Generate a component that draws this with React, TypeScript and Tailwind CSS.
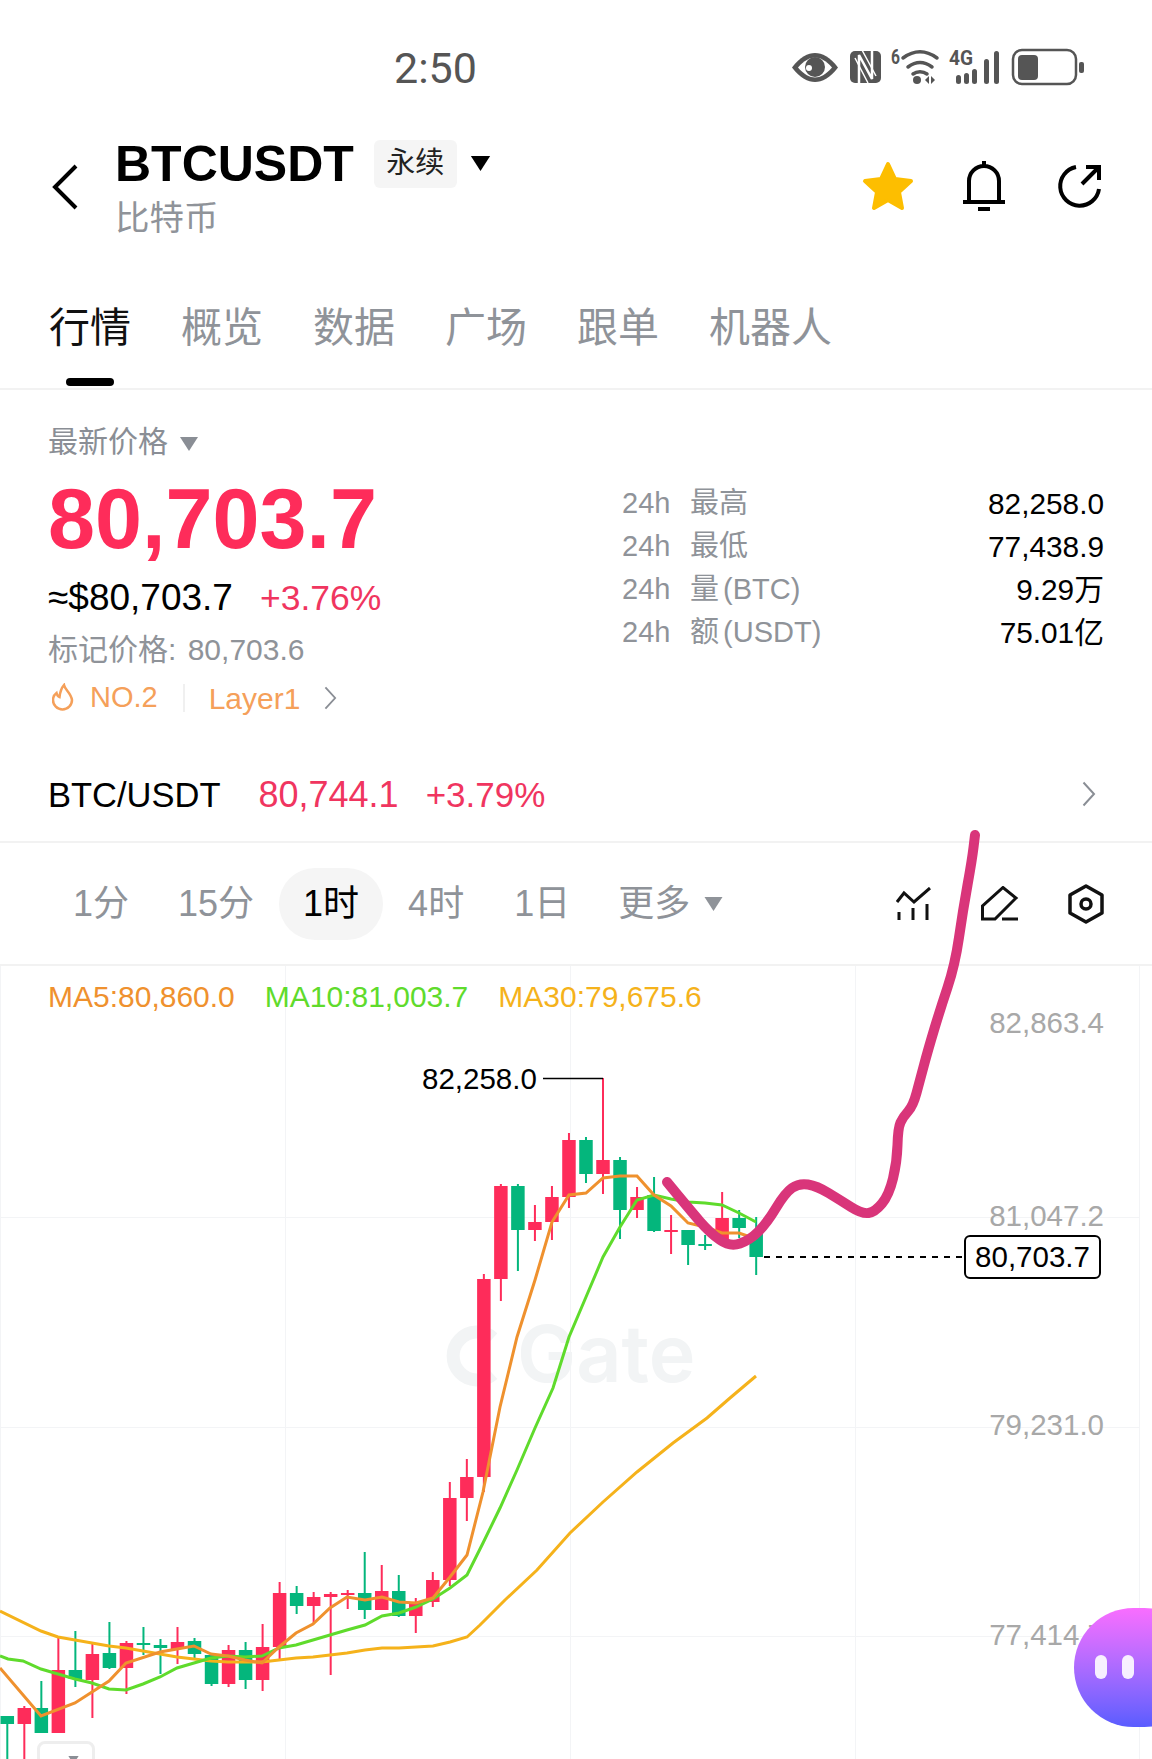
import React from 'react';

const RED = '#fe2c5a';
const GREEN = '#04b67c';

// [isRed, bodyTop, bodyBottom, wickTop, wickBottom], one candle every 17px
const candles: [number, number, number, number, number][] = [
  [0, 1716, 1724, 1716, 1760], [1, 1708, 1724, 1706, 1760], [0, 1708, 1733, 1681, 1733], [1, 1670, 1733, 1638, 1733],
  [0, 1670, 1679, 1631, 1687], [1, 1654, 1680, 1643, 1718], [0, 1653, 1668, 1622, 1669], [1, 1643, 1668, 1641, 1694],
  [0, 1643, 1645, 1627, 1655], [0, 1645, 1648, 1639, 1674], [1, 1642, 1649, 1627, 1664], [0, 1641, 1654, 1638, 1658],
  [0, 1655, 1684, 1655, 1686], [1, 1650, 1684, 1645, 1687], [0, 1650, 1680, 1642, 1689], [1, 1647, 1680, 1624, 1691],
  [1, 1593, 1647, 1582, 1659], [0, 1593, 1606, 1586, 1614], [1, 1597, 1606, 1592, 1623], [1, 1594, 1597, 1592, 1675],
  [1, 1593, 1595, 1590, 1609], [0, 1593, 1610, 1552, 1619], [1, 1591, 1610, 1565, 1610], [0, 1591, 1616, 1575, 1617],
  [1, 1602, 1616, 1598, 1633], [1, 1580, 1602, 1572, 1607], [1, 1498, 1580, 1482, 1586], [1, 1477, 1498, 1459, 1521],
  [1, 1279, 1477, 1274, 1492], [1, 1186, 1279, 1184, 1301], [0, 1186, 1230, 1184, 1271], [1, 1222, 1230, 1205, 1241],
  [1, 1197, 1222, 1186, 1240], [1, 1140, 1197, 1133, 1208], [0, 1140, 1174, 1137, 1183], [1, 1160, 1174, 1078, 1194],
  [0, 1160, 1210, 1157, 1239], [1, 1197, 1210, 1187, 1218], [0, 1195, 1231, 1177, 1232], [1, 1230, 1232, 1215, 1254],
  [0, 1230, 1245, 1230, 1265], [0, 1244, 1246, 1235, 1250], [1, 1218, 1240, 1192, 1240], [0, 1218, 1228, 1210, 1238],
  [0, 1233, 1257, 1217, 1275],
];

const ma5 =
  '0,1668 41,1716 75,1703 109,1681 126,1663 160,1652 177,1649 194,1646 211,1654 228,1656 245,1660 262,1663 279,1647 296,1633 313,1624 330,1608 347,1597 365,1600 382,1597 399,1602 416,1603 433,1598 450,1577 467,1555 483,1492 500,1407 517,1337 535,1280 552,1222 569,1195 586,1193 603,1178 620,1176 637,1176 654,1195 671,1206 688,1223 705,1227 722,1233 739,1233 756,1239';
const ma10 =
  '0,1656 8,1659 23,1661 41,1669 58,1674 75,1679 92,1683 109,1689 126,1690 143,1684 160,1677 177,1668 194,1663 211,1658 228,1656 245,1657 262,1656 279,1648 296,1645 313,1640 330,1635 347,1630 365,1625 382,1616 399,1613 416,1607 433,1599 450,1588 467,1575 483,1543 500,1508 517,1470 535,1428 553,1388 569,1337 586,1297 603,1257 620,1227 637,1200 654,1195 671,1199 688,1202 705,1203 722,1205 739,1213 756,1222';
const ma30 =
  '0,1611 41,1631 58,1637 75,1640 92,1643 109,1646 126,1648 143,1651 160,1654 177,1657 194,1659 211,1661 228,1662 245,1662 262,1662 279,1660 296,1658 313,1657 330,1655 347,1653 365,1650 382,1648 399,1648 416,1647 433,1646 450,1642 467,1637 480,1625 505,1600 537,1570 570,1533 603,1502 637,1472 673,1443 707,1418 730,1398 756,1376';

// pen stroke scribbled over the screenshot
const scribble: [number, number][] = [
  [667, 1182], [690, 1210], [710, 1233], [730, 1247], [750, 1240], [767, 1223], [785, 1193], [799, 1183], [817, 1186],
  [840, 1200], [862, 1214], [875, 1212], [889, 1195], [897, 1162], [898, 1128], [903, 1117], [913, 1106], [920, 1080],
  [928, 1050], [940, 1010], [955, 965], [963, 910], [972, 860], [975, 835],
];

// rounds the corners of the scribble with midpoint quadratics
function smoothPath(pts: [number, number][]) {
  let d = `M${pts[0][0]} ${pts[0][1]}`;
  for (let i = 1; i < pts.length - 1; i++) {
    const mx = (pts[i][0] + pts[i + 1][0]) / 2;
    const my = (pts[i][1] + pts[i + 1][1]) / 2;
    d += `Q${pts[i][0]} ${pts[i][1]} ${mx} ${my}`;
  }
  const last = pts[pts.length - 1];
  return `${d}L${last[0]} ${last[1]}`;
}

function Triangle({ className }: { className: string }) {
  return (
    <svg viewBox="0 0 18 14" className={className} fill="currentColor">
      <path d="M0 0h18L9 14z" />
    </svg>
  );
}

function StatusIcons() {
  return (
    <svg width="292" height="48" viewBox="792 43 292 48" className="text-[#555555]" fill="currentColor">
      {/* eye */}
      <path d="M792 67.500C800 57 808 53 815 53s15 4 23 14.500C830 78 822 82 815 82s-15-4-23-14.500z" />
      <path d="M798 67.500C804 60.500 810 57.500 815 57.500s11 3 17 10c-6 7-12 10-17 10s-11-3-17-10z" fill="#fff" />
      <circle cx="815" cy="67" r="10" />
      <circle cx="809" cy="68" r="3" fill="#fff" />
      {/* nfc */}
      <rect x="850" y="51" width="31" height="32" rx="5" />
      <path d="M859 83V55l13 24V51" fill="none" stroke="#fff" strokeWidth="2.500" />
      <path d="M862 50l14 26M855 58l13 25" fill="none" stroke="#fff" strokeWidth="1.500" />
      {/* wifi */}
      <text x="891" y="64" fontSize="20" fontWeight="700" textLength="9" lengthAdjust="spacingAndGlyphs" fontFamily="Roboto, sans-serif">6</text>
      <g fill="none" stroke="currentColor" strokeWidth="3.500" strokeLinecap="round">
        <path d="M903 58c11-8 23-8 34 0M908 67c8-6 16-6 24 0M913 74c4-3 10-3 14 0" />
      </g>
      <circle cx="917" cy="80" r="4" />
      <path d="M925 80l4-4v8zM931 76l4 4-4 4z" />
      {/* 4g */}
      <text x="949" y="65" fontSize="20" fontWeight="700" textLength="24" lengthAdjust="spacingAndGlyphs" fontFamily="Roboto, sans-serif">4G</text>
      <rect x="956" y="75" width="5" height="9" rx="2.500" />
      <rect x="964" y="73" width="5" height="11" rx="2.500" />
      <rect x="972" y="69" width="5" height="15" rx="2.500" />
      <rect x="984" y="59" width="5" height="25" rx="2.500" />
      <rect x="994" y="51" width="5" height="33" rx="2.500" />
      {/* battery */}
      <rect x="1013" y="50" width="63" height="34" rx="9" fill="none" stroke="currentColor" strokeWidth="2.500" />
      <rect x="1018" y="55" width="20" height="25" rx="4" />
      <rect x="1079" y="62" width="5" height="11" rx="2" />
    </svg>
  );
}

function Chevron({ className }: { className: string }) {
  return (
    <svg viewBox="0 0 14 26" className={className} fill="none" stroke="currentColor" strokeWidth="2">
      <path d="M1.500 1.500L12 13 1.500 24.500" />
    </svg>
  );
}

function Chart() {
  return (
    <div className="relative flex-1 overflow-hidden">
      <svg className="absolute inset-0" width="1152" height="793" viewBox="0 966 1152 793" fill="none">
        {[0, 285, 570, 855, 1139].map((x) => (
          <path key={x} d={`M${x + 0.5} 966V1759`} stroke="#f3f4f6" />
        ))}
        {[1217, 1427, 1636].map((y) => (
          <path key={y} d={`M0 ${y + 0.5}H1139`} stroke="#f3f4f6" />
        ))}
        {/* watermark logo */}
        <path d="M493 1338a24 24 0 1 0 0 36" stroke="#f2f4f5" strokeWidth="13" />
        <text x="517" y="1382" fontSize="79" fontWeight="600" fill="#f2f4f5" fontFamily="Inter, sans-serif">Gate</text>
        {candles.map(([red, top, bottom, wickTop, wickBottom], i) => {
          const x = 7.3 + i * 17.02;
          const color = red ? RED : GREEN;
          return (
            <g key={i} fill={color}>
              <rect x={x - 1} y={wickTop} width="2" height={wickBottom - wickTop} />
              <rect x={x - 6.750} y={top} width="13.500" height={bottom - top} />
            </g>
          );
        })}
        <polyline points={ma30} stroke="#f5b21b" strokeWidth="3" />
        <polyline points={ma10} stroke="#5fdb2c" strokeWidth="3" />
        <polyline points={ma5} stroke="#ef912e" strokeWidth="3" />
        <path d="M543 1078.500H603" stroke="#000" strokeWidth="1.500" />
        <path d="M764 1257H964" stroke="#000" strokeWidth="2" strokeDasharray="6 6" />
      </svg>

      <div className="absolute left-[48px] top-[13px] flex gap-[30px] text-[30px] leading-9">
        <span className="text-[#ef912e]">MA5:80,860.0</span>
        <span className="text-[#5fdb2c]">MA10:81,003.7</span>
        <span className="text-[#f5b21b]">MA30:79,675.6</span>
      </div>

      <span className="absolute right-[48px] top-[39px] text-[29.500px] leading-9 text-[#a8a8a8]">82,863.4</span>
      <span className="absolute right-[48px] top-[232px] text-[29.500px] leading-9 text-[#a8a8a8]">81,047.2</span>
      <span className="absolute right-[48px] top-[441px] text-[29.500px] leading-9 text-[#a8a8a8]">79,231.0</span>
      <span className="absolute right-[48px] top-[651px] text-[29.500px] leading-9 text-[#a8a8a8]">77,414.7</span>

      <span className="absolute left-[422px] top-[95px] text-[29.500px] leading-9 text-black">82,258.0</span>
      <div className="absolute left-[964px] top-[269px] flex h-[44px] w-[137px] items-center justify-center rounded-md border-2 border-black bg-white text-[29.500px] text-black">
        80,703.7
      </div>

      <div className="absolute left-[37px] top-[775px] h-[40px] w-[58px] rounded-lg border-[3px] border-[#eeeeee] bg-white">
        <Triangle className="absolute left-[27px] top-[12px] h-[8px] w-[13px] text-[#8a8e95]" />
      </div>
    </div>
  );
}

export default function App() {
  return (
    <div className="relative flex h-[1759px] w-[1152px] flex-col overflow-hidden bg-white font-['Liberation_Sans','Noto_Sans_CJK_SC',sans-serif]">
      {/* Status bar */}
      <div className="flex h-[137px] shrink-0 items-center pl-[394px] pr-[68px]">
        <span className="font-['Roboto',sans-serif] text-[43px] text-[#555555]">2:50</span>
        <div className="ml-auto mt-[-3px]">
          <StatusIcons />
        </div>
      </div>

      {/* Header */}
      <div className="flex h-[100px] shrink-0 items-center pl-[52px] pr-[49px]">
        <svg viewBox="0 0 26 46" className="h-[46px] w-[26px] text-black" fill="none" stroke="currentColor" strokeWidth="4">
          <path d="M24 2L3 23l21 21" />
        </svg>
        <div className="ml-[37px] flex flex-col">
          <div className="flex items-center">
            <span className="text-[50px] font-bold leading-[56px] text-black">BTCUSDT</span>
            <span className="ml-[20px] flex h-[48px] w-[83px] items-center justify-center rounded-md bg-[#f5f5f5] text-[29px] text-[#222222]">永续</span>
            <Triangle className="ml-[13px] h-[15px] w-[21px] text-black" />
          </div>
          <span className="mt-[5px] text-[34.500px] leading-[42px] text-[#8f9399]">比特币</span>
        </div>
        <div className="mb-[3px] ml-auto flex items-center">
          <svg width="52" height="50" viewBox="0 0 52 50" fill="#fdbe00" stroke="#fdbe00" strokeWidth="4" strokeLinejoin="round">
            <path d="M26 3l7 15 16 2-12 11 3 16-14-8-14 8 3-16L3 20l16-2z" />
          </svg>
          <svg className="ml-[49px]" width="42" height="50" viewBox="0 0 42 50" fill="none" stroke="#000" strokeWidth="4">
            <path d="M6 40V20a15 15 0 0 1 30 0v20M0 41h42M15 48h12M21 0v5" />
          </svg>
          <svg className="ml-[52px]" width="46" height="46" viewBox="0 0 46 46" fill="none" stroke="#000" strokeWidth="4">
            <path d="M19 4a19.500 19.500 0 1 0 23 22M25 21L41 5M29 4h13v13" />
          </svg>
        </div>
      </div>

      {/* Tabs */}
      <div className="flex h-[153px] shrink-0 gap-[50px] border-b-2 border-[#f2f2f2] pl-[49px] pt-[67px] text-[41px] leading-[48px] text-[#8f9399]">
        <div className="flex flex-col items-center text-[#111111]">
          <span>行情</span>
          <div className="mt-[26px] h-[8px] w-[48px] rounded-full bg-black" />
        </div>
        <span>概览</span>
        <span>数据</span>
        <span>广场</span>
        <span>跟单</span>
        <span>机器人</span>
      </div>

      {/* Prices */}
      <div className="flex shrink-0 px-[48px]">
        <div className="w-[574px] pt-[33px]">
          <div className="flex h-[36px] items-center text-[30px] text-[#8a8e95]">
            最新价格
            <Triangle className="ml-[11px] mt-[5px] h-[14px] w-[20px]" />
          </div>
          <div className="mt-[18px] text-[84.500px] font-bold leading-[84px] text-[#fe2c5a]">80,703.7</div>
          <div className="mt-[17px] flex items-center gap-[27px] leading-[40px]">
            <span className="text-[37px] text-black">≈$80,703.7</span>
            <span className="text-[35.500px] text-[#f0355f]">+3.76%</span>
          </div>
          <div className="mt-[14px] text-[30px] leading-[36px] text-[#8f9399]">
            标记价格: <span className="ml-[3px]">80,703.6</span>
          </div>
          <div className="mt-[12px] flex h-[36px] items-center text-[30px] text-[#f5a05a]">
            <svg width="22" height="30" viewBox="0 0 22 30" fill="none" stroke="currentColor" strokeWidth="2.500" className="ml-[4px]">
              <path d="M12 2c1 5 7 8 8 15a9.500 9.500 0 0 1-19 0c0-3 1.500-5.500 3.500-7 .5 2 1.500 3.500 3 4 .5-4 1-8 4.500-12z" />
            </svg>
            <span className="ml-[16px] text-[29px]">NO.2</span>
            <div className="ml-[25px] h-[28px] w-[2px] bg-[#f0f0f0]" />
            <span className="ml-[24px]">Layer1</span>
            <Chevron className="ml-[24px] h-[24px] w-[13px] text-[#8a8e95]" />
          </div>
        </div>
        <div className="flex-1 pt-[92px] text-[29px] leading-[43px]">
          {[
            ['最高', '82,258.0'],
            ['最低', '77,438.9'],
            ['量 (BTC)', '9.29万'],
            ['额 (USDT)', '75.01亿'],
          ].map(([label, value]) => (
            <div key={label} className="flex justify-between">
              <span className="text-[#8f9399] [word-spacing:-4px]">
                <span className="inline-block w-[68px]">24h</span>
                {label}
              </span>
              <span className="text-[29.800px] text-black">{value}</span>
            </div>
          ))}
        </div>
      </div>

      {/* Spot pair */}
      <div className="mt-[59px] flex h-[68px] shrink-0 items-start border-b-2 border-[#f2f2f2] px-[48px] text-[36px] leading-[40px]">
        <span className="text-[34.500px] text-black">BTC/USDT</span>
        <span className="ml-[38px] text-[#f0355f]">80,744.1</span>
        <span className="ml-[27px] text-[35px] text-[#f0355f]">+3.79%</span>
        <Chevron className="ml-auto mr-[8px] mt-[6px] h-[26px] w-[14px] text-[#8a8e95]" />
      </div>

      {/* Timeframes */}
      <div className="flex h-[123px] shrink-0 items-center border-b-2 border-[#f2f2f2] pl-[48px] pr-[48px] text-[36px] text-[#8f9399]">
        <span className="pl-[25px] pr-[24px]">1分</span>
        <span className="px-[25px]">15分</span>
        <span className="flex h-[72px] items-center rounded-full bg-[#f5f5f5] px-[24px] text-black">1时</span>
        <span className="px-[25px]">4时</span>
        <span className="pl-[25px] pr-[23px]">1日</span>
        <span className="px-[25px]">更多</span>
        <Triangle className="ml-[-11px] h-[14px] w-[19px]" />
        <div className="ml-auto flex items-center">
          <svg width="35" height="34" viewBox="0 0 35 34" fill="none" stroke="#111" strokeWidth="3">
            <path d="M1 15l7-9 10 9L34 1M3 25v8M17 21v12M31 17v16" />
          </svg>
          <svg className="ml-[50px]" width="38" height="35" viewBox="0 0 38 35" fill="none" stroke="#111" strokeWidth="3">
            <path d="M1.500 33V20L22 1.500 35 12 14 33zM21 33h16" />
          </svg>
          <svg className="ml-[49px]" width="36" height="40" viewBox="0 0 36 40" fill="none" stroke="#111" strokeWidth="3.500" strokeLinejoin="round">
            <path d="M18 2l16 9v18l-16 9-16-9V11z" />
            <circle cx="18" cy="20" r="5" />
          </svg>
        </div>
      </div>

      <Chart />

      {/* Floating assistant */}
      <div className="absolute left-[1074px] top-[1608px] h-[119px] w-[130px] rounded-full bg-gradient-to-b from-[#f96dff] to-[#5a5cff]">
        <div className="absolute left-[21px] top-[47px] h-[24px] w-[12px] rounded-full bg-white/90" />
        <div className="absolute left-[48px] top-[47px] h-[24px] w-[12px] rounded-full bg-white/90" />
      </div>

      {/* Scribble lies over everything, including the row dividers */}
      <svg className="pointer-events-none absolute inset-0" width="1152" height="1759" viewBox="0 0 1152 1759" fill="none">
        <path d={smoothPath(scribble)} stroke="#d9357a" strokeWidth="10" strokeLinecap="round" strokeLinejoin="round" />
      </svg>
    </div>
  );
}
